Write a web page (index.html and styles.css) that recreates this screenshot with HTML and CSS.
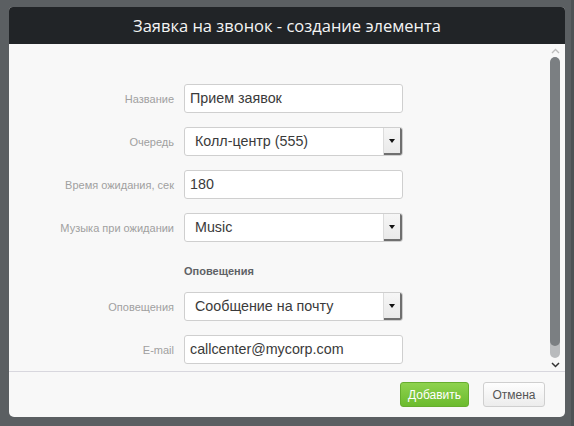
FILE: index.html
```html
<!DOCTYPE html>
<html lang="ru">
<head>
<meta charset="utf-8">
<title>Заявка на звонок</title>
<link rel="stylesheet" href="styles.css">
</head>
<body>
<div class="dialog">
  <div class="dialog-header">Заявка на звонок - создание элемента</div>
  <div class="dialog-body">
    <form class="form">
      <div class="row">
        <label class="label">Название</label>
        <div class="input">Прием заявок</div>
      </div>
      <div class="row">
        <label class="label">Очередь</label>
        <div class="select"><span class="select-text">Колл-центр (555)</span><span class="select-btn"><i class="caret"></i></span></div>
      </div>
      <div class="row">
        <label class="label">Время ожидания, сек</label>
        <div class="input">180</div>
      </div>
      <div class="row">
        <label class="label">Музыка при ожидании</label>
        <div class="select"><span class="select-text">Music</span><span class="select-btn"><i class="caret"></i></span></div>
      </div>
      <div class="row section">
        <span class="label"></span>
        <div class="section-title">Оповещения</div>
      </div>
      <div class="row">
        <label class="label">Оповещения</label>
        <div class="select"><span class="select-text">Сообщение на почту</span><span class="select-btn"><i class="caret"></i></span></div>
      </div>
      <div class="row">
        <label class="label">E-mail</label>
        <div class="input">callcenter@mycorp.com</div>
      </div>
    </form>
    <div class="scrollbar">
      <svg class="arrow up" width="9" height="6" viewBox="0 0 9 6"><path d="M1 5 L4.5 1.5 L8 5" fill="none" stroke="currentColor" stroke-width="1.3"/></svg>
      <div class="track"><div class="thumb"></div></div>
      <svg class="arrow down" width="9" height="6" viewBox="0 0 9 6"><path d="M1 1 L4.5 4.5 L8 1" fill="none" stroke="currentColor" stroke-width="1.5"/></svg>
    </div>
  </div>
  <div class="dialog-footer">
    <button class="btn btn-primary" type="button">Добавить</button>
    <button class="btn btn-default" type="button">Отмена</button>
  </div>
</div>
</body>
</html>
```
FILE: styles.css
```css
html {
  background: #5b5f62;
  box-shadow: inset -3px 0 0 #4e5255;
  height: 100%;
}

body {
  margin: 0;
  padding: 7px 0 0 9px;
  font-family: "Liberation Sans", Arial, sans-serif;
}

.dialog {
  width: 556px;
  height: 410px;
  background: #f8f8f8;
  border-radius: 4px 4px 5px 5px;
  display: flex;
  flex-direction: column;
  overflow: hidden;
}

.dialog-header {
  height: 37px;
  flex: none;
  background: #212427;
  color: #f4f4f4;
  font-family: "Open Sans", "Noto Sans", sans-serif;
  font-size: 16.5px;
  line-height: 37px;
  text-align: center;
}

.dialog-body {
  height: 327px;
  flex: none;
  display: flex;
  overflow: hidden;
}

.form {
  flex: 1;
  display: flex;
  flex-direction: column;
  gap: 14px;
  padding-top: 40px;
  margin: 0;
}

.row {
  display: flex;
  align-items: center;
  gap: 10px;
}

.label {
  width: 165px;
  flex: none;
  text-align: right;
  font-size: 11px;
  color: #a0a0a0;
}

.input,
.select {
  width: 219px;
  height: 29px;
  box-sizing: border-box;
  background: #fff;
  border: 1px solid #cfcfcf;
  border-radius: 3px;
  font-size: 14.3px;
  color: #3a3a3a;
  line-height: 27px;
}

.input {
  padding-left: 5px;
}

.select {
  display: flex;
  overflow: hidden;
}

.select-text {
  flex: 1;
  padding-left: 10px;
}

.select-btn {
  width: 18px;
  flex: none;
  display: flex;
  align-items: center;
  justify-content: center;
  background: linear-gradient(#f6f6f6, #e8e8e8);
  border-left: 1px solid #dcdcdc;
  box-shadow: inset -2px -2px 0 #6f6f6f;
}

.caret {
  width: 0;
  height: 0;
  border-left: 3px solid transparent;
  border-right: 3px solid transparent;
  border-top: 4px solid #111;
  margin: 0 2px 1px 0;
}

.section {
  margin-top: 9px;
}

.section-title {
  font-size: 11px;
  font-weight: bold;
  color: #5f6266;
  line-height: 13px;
}

.scrollbar {
  width: 10px;
  flex: none;
  margin-right: 5px;
  display: flex;
  flex-direction: column;
  align-items: center;
  padding-top: 4px;
}

.arrow {
  display: block;
  flex: none;
}

.arrow.up {
  color: #bdbdbd;
}

.arrow.down {
  color: #333;
  margin-top: 4px;
}

.track {
  width: 10px;
  height: 301px;
  margin-top: 3px;
  background: #b9bbbd;
  border-radius: 5px;
  overflow: hidden;
}

.thumb {
  height: 289px;
  background: #7b7f82;
  border-radius: 5px;
}

.dialog-footer {
  flex: 1;
  border-top: 1px solid #d8d7de;
  display: flex;
  justify-content: flex-end;
  align-items: flex-start;
  gap: 14px;
  padding: 10px 20px 0 0;
}

.btn {
  height: 25px;
  box-sizing: border-box;
  border-radius: 3px;
  font-family: "Liberation Sans", Arial, sans-serif;
  font-size: 12px;
  padding: 0;
  cursor: pointer;
}

.btn-primary {
  width: 69px;
  color: #fff;
  background: linear-gradient(#8ed24e, #6bbb2e);
  border: 1px solid #66ad2e;
}

.btn-default {
  width: 62px;
  color: #555;
  background: linear-gradient(#fefefe, #ececec);
  border: 1px solid #cfcfcf;
}
```
